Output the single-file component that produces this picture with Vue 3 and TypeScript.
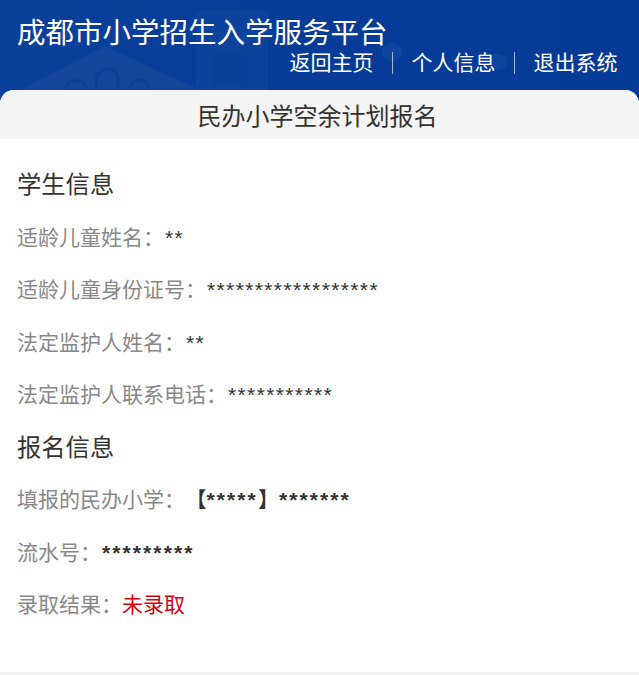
<script setup lang="ts">
const navItems = ['返回主页', '个人信息', '退出系统']
const student = [
  { label: '适龄儿童姓名：', value: '**' },
  { label: '适龄儿童身份证号：', value: '******************' },
  { label: '法定监护人姓名：', value: '**' },
  { label: '法定监护人联系电话：', value: '***********' },
]
</script>

<template>
  <div class="page">
    <header class="header">
      <svg class="decor" viewBox="0 0 639 104" width="639" height="104" aria-hidden="true">
        <path d="M20 90 L105 46 L200 90 Z" fill="#1c4a9f" opacity="0.6" />
        <path d="M66 90 a10 10 0 0 1 20 0 Z M96 90 V80 a11 11 0 0 1 22 0 V90 Z M129 90 a10 10 0 0 1 20 0 Z" fill="none" stroke="#0e3f98" stroke-width="3" />
        <rect x="196" y="10" width="72" height="80" fill="#154a9f" opacity="0.45" />
        <rect x="212" y="52" width="36" height="34" fill="#0b3f96" opacity="0.4" />
        <ellipse cx="392" cy="52" rx="10" ry="10" fill="#1a55ad" opacity="0.35" />
        <ellipse cx="497" cy="62" rx="10" ry="8" fill="#1a55ad" opacity="0.35" />
      </svg>
      <h1 class="site-title">成都市小学招生入学服务平台</h1>
      <nav class="nav">
        <template v-for="(item, i) in navItems" :key="item">
          <span v-if="i > 0" class="nav-sep"></span>
          <a class="nav-link">{{ item }}</a>
        </template>
      </nav>
    </header>

    <main class="card">
      <h2 class="card-title">民办小学空余计划报名</h2>
      <section class="content">
        <h3 class="section-title">学生信息</h3>
        <p v-for="row in student" :key="row.label" class="row">
          <span class="label">{{ row.label }}</span><span class="value">{{ row.value }}</span>
        </p>
        <h3 class="section-title">报名信息</h3>
        <p class="row">
          <span class="label">填报的民办小学：</span><span class="value strong school"><span class="bracket">【</span>*****<span class="bracket">】</span>*******</span>
        </p>
        <p class="row">
          <span class="label">流水号：</span><span class="value strong">*********</span>
        </p>
        <p class="row">
          <span class="label">录取结果：</span><span class="rejected">未录取</span>
        </p>
      </section>
      <div class="footer-band"></div>
    </main>
  </div>
</template>

<style>
html, body { margin: 0; background: #fff; }
</style>

<style scoped>
.page {
  width: 639px;
  height: 675px;
  overflow: hidden;
  font-family: "Noto Sans CJK SC", "Liberation Sans", sans-serif;
  background: #fff;
}
.header {
  position: relative;
  height: 104px;
  padding: 0 21.5px 0 17px;
  box-sizing: border-box;
  background: linear-gradient(90deg, #0b419b 0%, #063c98 50%, #053a96 100%);
  color: #fff;
  overflow: hidden;
}
.decor { position: absolute; left: 0; top: 0; }
.site-title {
  position: relative;
  margin: 0;
  padding-top: 11px;
  font-size: 28.5px;
  line-height: 40px;
  font-weight: 400;
}
.nav {
  position: relative;
  display: flex;
  justify-content: flex-end;
  align-items: center;
  height: 20px;
  font-size: 21px;
}
.nav-link { line-height: 20px; white-space: nowrap; }
.nav-sep {
  width: 1px;
  height: 22px;
  margin: 4px 18.5px 0 18.5px;
  background: #9fb6dc;
}
.card {
  position: relative;
  margin-top: -14px;
  border-radius: 14px 14px 0 0;
  background: #fff;
  overflow: hidden;
}
.card-title {
  margin: 0;
  height: 49px;
  padding-right: 4px;
  background: #f4f4f4;
  color: #333;
  font-size: 24px;
  line-height: 50px;
  font-weight: 400;
  text-align: center;
}
.content { padding: 18px 17px 0; height: 533px; box-sizing: border-box; }
.section-title {
  margin: 0;
  height: 52.5px;
  color: #333;
  font-size: 24.3px;
  line-height: 52.5px;
  font-weight: 400;
}
.row {
  margin: 0;
  height: 52.5px;
  font-size: 21px;
  line-height: 52.5px;
  white-space: nowrap;
}
.label { color: #888; }
.value {
  margin-left: 1px;
  color: #333;
  font-family: "Liberation Sans", "Noto Sans CJK SC", sans-serif;
  letter-spacing: 1.38px;
}
.strong { font-weight: 700; letter-spacing: 2.1px; }
.school { margin-left: 11px; }
.bracket { letter-spacing: 0; }
.rejected { color: #d9000f; }
.footer-band { height: 3px; background: #f2f2f2; }
</style>
